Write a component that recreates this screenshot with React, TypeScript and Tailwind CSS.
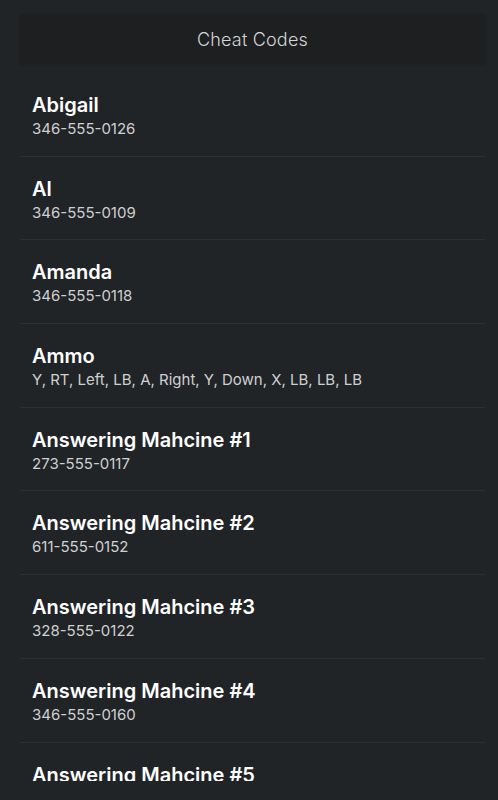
const codes = [
  { name: "Abigail", code: "346-555-0126" },
  { name: "Al", code: "346-555-0109" },
  { name: "Amanda", code: "346-555-0118" },
  { name: "Ammo", code: "Y, RT, Left, LB, A, Right, Y, Down, X, LB, LB, LB" },
  { name: "Answering Mahcine #1", code: "273-555-0117" },
  { name: "Answering Mahcine #2", code: "611-555-0152" },
  { name: "Answering Mahcine #3", code: "328-555-0122" },
  { name: "Answering Mahcine #4", code: "346-555-0160" },
  { name: "Answering Mahcine #5", code: "346-555-0144" },
];

export default function App() {
  return (
    <div
      className="h-[800px] w-full bg-[#212427] pl-5 pr-[13px] pt-[14px] pb-[19px] flex flex-col"
      style={{ fontFamily: "Inter, 'Noto Sans', sans-serif" }}
    >
      <div className="h-[50px] shrink-0 bg-[#1e1f21] flex items-center justify-center shadow-[0_1px_2px_rgba(0,0,0,0.15)]">
        <span className="text-[18px] font-light text-[#d6d6d6] tracking-[0.01em]">Cheat Codes</span>
      </div>
      <div className="mt-[9px] flex-1 overflow-hidden">
        {codes.map((c) => (
          <div
            key={c.name}
            className="h-[83.7px] border-b border-[#2c2f33] px-3 pt-[20px]"
          >
            <div className="text-[20px] leading-[24px] font-semibold text-white">{c.name}</div>
            <div className="text-[15px] leading-[24px] text-[#cfd0d1]">{c.code}</div>
          </div>
        ))}
      </div>
    </div>
  );
}
